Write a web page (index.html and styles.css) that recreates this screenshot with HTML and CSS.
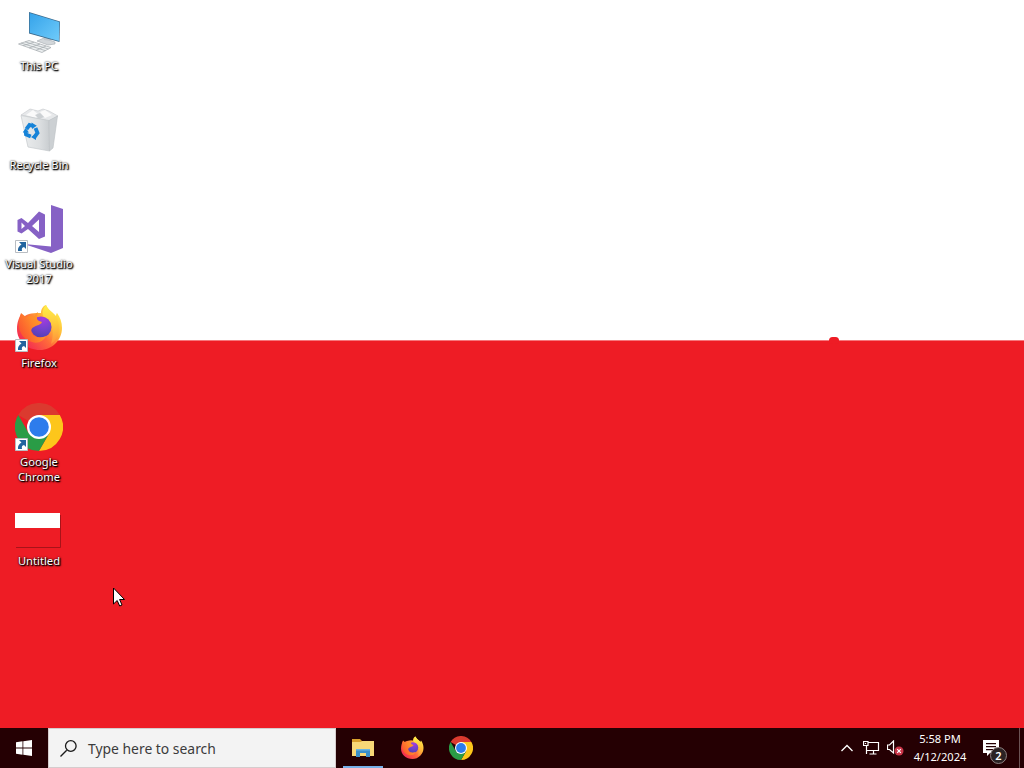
FILE: index.html
```
<!DOCTYPE html>
<html lang="en">

<head>
    <meta charset="UTF-8">
    <meta name="viewport" content="width=device-width, initial-scale=1.0">
    <title>Desktop</title>
    <link rel="stylesheet" href="styles.css">
</head>

<body>
    <!-- Shared icons, used on the desktop and in the taskbar -->
    <svg class="defs" width="0" height="0">
        <defs>
            <linearGradient id="screen" x1="0" y1="0" x2="1" y2="1">
                <stop offset="0" stop-color="#35a3ea" />
                <stop offset="1" stop-color="#6fcbfa" />
            </linearGradient>
            <linearGradient id="bin" x1="0" y1="0" x2="1" y2="0">
                <stop offset="0" stop-color="#eceeef" />
                <stop offset="0.65" stop-color="#dcdfe1" />
                <stop offset="1" stop-color="#c9cdd0" />
            </linearGradient>
            <linearGradient id="fox" x1="0.9" y1="0.15" x2="0.15" y2="0.8">
                <stop offset="0" stop-color="#ffe94a" />
                <stop offset="0.3" stop-color="#ffb638" />
                <stop offset="0.6" stop-color="#ff6a3a" />
                <stop offset="1" stop-color="#f5324f" />
            </linearGradient>
            <linearGradient id="fox-tail" x1="0" y1="0" x2="0" y2="1">
                <stop offset="0" stop-color="#fff04a" />
                <stop offset="0.5" stop-color="#ffc83c" />
                <stop offset="1" stop-color="#ff8f3c" />
            </linearGradient>
            <linearGradient id="fox-head" x1="1" y1="0" x2="0" y2="0.6">
                <stop offset="0" stop-color="#ffa42a" />
                <stop offset="0.5" stop-color="#ff8a2a" />
                <stop offset="1" stop-color="#fb5630" />
            </linearGradient>
            <radialGradient id="globe" cx="0.6" cy="0.1" r="0.9">
                <stop offset="0" stop-color="#a63be0" />
                <stop offset="0.6" stop-color="#7142cc" />
                <stop offset="1" stop-color="#5540b4" />
            </radialGradient>
            <symbol id="firefox" viewBox="0 0 48 48">
                <path fill="url(#fox)" d="M26 9 C26 5 28 2 31 1 C33 6 36 7 39 10 L41 12 C41 10 42 9 42 9 C45 13 47 18 47 24 C47 36 37 46 25 46 C12 46 2 37 2 25 C2 18 4 14 6 10 L9 13 C12 9 20 9 26 9z" />
                <path fill="url(#fox-tail)" d="M31 1 C33 6 38 8 41 13 C46 21 45 34 36 40 C39 31 39 21 31 15 C26 12 27 5 31 1z" />
                <circle cx="26" cy="23" r="10.5" fill="url(#globe)" />
                <path fill="url(#fox-head)" d="M6 9 L11 13 C14 11 17 12 19 13 C20 11 21 9 23 8 C22 11 22 13 22 15 C23 17 25 17 27 18 C26 21 22 21 19 23 C16 24 15 28 18 31 C21 34 27 34 31 32 C29 37 23 40 17 38 C9 36 4 29 4 21 C4 16 5 13 6 9z" />
            </symbol>
            <symbol id="chrome" viewBox="0 0 48 48">
                <path fill="#db3a2f" d="M24 24 L3.2 12 A24 24 0 0 1 44.8 12z" />
                <path fill="#fdc61b" d="M24 12 L44.8 12 A24 24 0 0 1 24 48 L34.4 30z" />
                <path fill="#2a9c46" d="M3.2 12 L13.6 30 L24 36 L34.4 30 L24 48 A24 24 0 0 1 3.2 12z" />
                <circle cx="24" cy="24" r="12" fill="#fff" />
                <circle cx="24" cy="24" r="9.8" fill="#2d7cec" />
            </symbol>
            <symbol id="shortcut" viewBox="0 0 13 13">
                <path fill="#fff" stroke="#b9bdc2" d="M0.5 0.5 H12.5 V12.5 H0.5z" />
                <path fill="#23649f" d="M4 2 H11 V9 L9 7 C7 7.500 6.500 8.500 7 11 H3 C2.500 8 4 6 6.500 4.500z" />
            </symbol>
        </defs>
    </svg>

    <div class="desktop">
        <div class="icons">
            <div class="icon">
                <svg class="picture" viewBox="0 0 48 48">
                    <path fill="#d3d7da" stroke="#a3a9ae" stroke-width="0.6" d="M22 34 L29 31 L40 35 L40 37 L33 38z" />
                    <path fill="#c3c8cc" d="M29 28 L36 30 L36 34 L29 33z" />
                    <path fill="#3c6a8c" d="M14 5 L45 14.5 L44.5 35 L14 26.5z" />
                    <path fill="url(#screen)" d="M14.7 6 L44.3 15 L43.9 34 L14.7 25.7z" />
                    <path fill="#edf0f1" stroke="#a0a6aa" stroke-width="0.7" d="M3.5 37 L14 33.5 L36 40.5 L27 45.5z" />
                    <path fill="none" stroke="#a8aeb2" stroke-width="0.8" d="M6 36 L30.5 43.7 M10 34.8 L33.5 42 M8 38.6 L19 35.2 M14 41 L25 37 M21 43.4 L31 39" />
                </svg>
                <span>This PC</span>
            </div>
            <div class="icon">
                <svg class="picture" viewBox="0 0 48 48">
                    <path fill="#e6e8ea" stroke="#c4c8cb" stroke-width="0.6" d="M6 9 L15 3 L23 5 L28 3 L34 5 L43 10 L34 15z" />
                    <path fill="#fafafa" d="M11 9 L18 4 L24 9 L21 12z M25 6 L30 4 L37 9 L30 12z" />
                    <path fill="#ccd0d3" d="M20 9 L25 7 L29 11 L24 13z" />
                    <path fill="url(#bin)" stroke="#c4c8cb" stroke-width="0.7" d="M6 9.500 L34 14.5 L34.5 45 L13 41z" />
                    <path fill="#ccd0d3" stroke="#babfc2" stroke-width="0.6" d="M34 14.5 L42.5 10 L38 42 L34.5 45z" />
                    <path fill="none" stroke="#1683d8" stroke-width="3.8" d="M11.5 23 L14.5 19 L18 20 M20.5 22 L22.5 27 L19.5 31 M15.8 30.5 L11 28.5 L10.5 25" />
                    <path fill="#1683d8" d="M16.5 16.5 L21.8 19.8 L17 23z M21 27.5 L16 31 L21 34z M7.8 26.5 L10.6 22 L14 26.5z" />
                </svg>
                <span>Recycle Bin</span>
            </div>
            <div class="icon">
                <svg class="picture" viewBox="0 0 48 48">
                    <path fill="#8661c5" d="M36 0 L48 4 V43 L36 48 L9 39 L36 41.5z" />
                    <path fill="#8661c5" fill-rule="evenodd" d="M2.500 15 L6.500 13 L13 18 L24 6.500 L30 9.500 V31.500 L24 34 L13 24 L6.500 28.500 L2.500 26.500z M6.500 17.500 V24 L10 21z M24 14.500 L17 21 L24 27z" />
                    <use href="#shortcut" x="0" y="35" width="13" height="13" />
                </svg>
                <span>Visual Studio<br>2017</span>
            </div>
            <div class="icon">
                <svg class="picture" viewBox="0 0 48 48">
                    <use href="#firefox" width="48" height="48" />
                    <use href="#shortcut" x="0" y="35" width="13" height="13" />
                </svg>
                <span>Firefox</span>
            </div>
            <div class="icon">
                <svg class="picture" viewBox="0 0 48 48">
                    <use href="#chrome" width="48" height="48" />
                    <use href="#shortcut" x="0" y="35" width="13" height="13" />
                </svg>
                <span>Google<br>Chrome</span>
            </div>
            <div class="icon">
                <svg class="picture" viewBox="0 0 48 48">
                    <path fill="#ee1c25" d="M0 11 H45 V45 H0z" />
                    <path fill="#fff" d="M0 11 H45 V26 H0z" />
                    <path fill="none" stroke="#a81319" d="M1 45.5 H45.5 V13" />
                </svg>
                <span>Untitled</span>
            </div>
        </div>

        <div class="blob"></div>

        <svg class="cursor" viewBox="0 0 12 20">
            <path fill="#fff" stroke="#000" d="M0.5 1 V17 L4.2 13.5 L6.7 19 L9 18 L6.6 12.5 H11.5z" />
        </svg>
    </div>

    <div class="taskbar">
        <div class="start">
            <svg width="16" height="16" viewBox="0 0 16 16">
                <path fill="#fff" d="M0 2.3 L6.5 1.3 V7.5 H0z M7.3 1.2 L16 0 V7.5 H7.3z M0 8.4 H6.5 V14.7 L0 13.7z M7.3 8.4 H16 V16 L7.3 14.8z" />
            </svg>
        </div>
        <div class="search">
            <svg width="17" height="17" viewBox="0 0 17 17">
                <path fill="none" stroke="#1a1a1a" stroke-width="1.3" d="M6.7 10.3 L0.5 16.5" />
                <circle cx="10.8" cy="6" r="5.3" fill="none" stroke="#1a1a1a" stroke-width="1.3" />
            </svg>
            <span>Type here to search</span>
        </div>
        <div class="apps">
            <div class="app active">
                <svg width="22" height="20" viewBox="0 0 22 20">
                    <path fill="#d9a02c" d="M0 1 H8 L10 3 H22 V8 H0z" />
                    <path fill="#f8d877" d="M0 4 H8.5 L10.5 3 H22 V18 H0z" />
                    <path fill="#3a8fc9" d="M4 19 V11 H18 V19 H14 V15 H8 V19z" />
                    <path fill="#69b5e2" d="M4 11 H18 V12.5 H4z" />
                </svg>
            </div>
            <div class="app">
                <svg width="24" height="24"><use href="#firefox" width="24" height="24" /></svg>
            </div>
            <div class="app">
                <svg width="24" height="24"><use href="#chrome" width="24" height="24" /></svg>
            </div>
        </div>
        <div class="tray">
            <svg width="12" height="8" viewBox="0 0 12 8">
                <path fill="none" stroke="#fff" stroke-width="1.3" d="M0.5 7 L6 1.5 L11.5 7" />
            </svg>
            <svg class="network" width="17" height="14" viewBox="0 0 17 14">
                <path fill="none" stroke="#fff" stroke-width="1.2" d="M5 1.5 H15.5 V9.5 H3.5 M3.5 5 V13 M10.5 9.5 V12.5 M6.5 13 H13.5" />
                <path fill="none" stroke="#fff" stroke-width="1.2" d="M0.5 0.5 H5 V4.5 H0.5z M2.5 2 V3" />
            </svg>
            <svg class="volume" width="17" height="16" viewBox="0 0 17 16">
                <path fill="none" stroke="#fff" stroke-width="1.2" d="M0.5 5 H2.5 L6.5 1 V13 L2.5 9.5 H0.5z" />
                <circle cx="12" cy="11" r="4.5" fill="#c93548" />
                <path stroke="#fff" stroke-width="1.2" d="M10.2 9.2 L13.8 12.8 M13.8 9.2 L10.2 12.8" />
            </svg>
            <div class="clock">
                <div class="time">5:58 PM</div>
                <div class="date">4/12/2024</div>
            </div>
            <div class="notifications">
                <svg width="17" height="16" viewBox="0 0 17 16">
                    <path fill="#fff" fill-rule="evenodd" d="M0 0 H16 V13 H7 L4 16 V13 H0z M3 3 V4.2 H13 V3z M3 6 V7.2 H13 V6z M3 9 V10.2 H10 V9z" />
                </svg>
                <span class="count">2</span>
            </div>
            <div class="show-desktop"></div>
        </div>
    </div>
</body>

</html>
```
FILE: styles.css
```
body {
    margin: 0;
    height: 768px;
    display: flex;
    flex-direction: column;
    overflow: hidden;
    font-family: "Noto Sans", "Open Sans", sans-serif;
}

.defs {
    position: absolute;
}

.desktop {
    position: relative;
    flex: 1;
    background: linear-gradient(#fff 340px, #f6767c 340px, #f6767c 341px, #ee1c25 341px);
}

.icons {
    display: flex;
    flex-direction: column;
    width: 78px;
}

.icon {
    display: flex;
    flex-direction: column;
    align-items: center;
    gap: 3px;
    height: 92px;
    padding-top: 7px;
    color: #fff;
    font-size: 11.2px;
    line-height: 15px;
    text-align: center;
    white-space: nowrap;
    text-shadow: 1px 1px 1px #000, 1px 1px 2px #000, 0 0 2px #000;
}

.picture {
    width: 48px;
    height: 48px;
    flex-shrink: 0;
}

/* small bump on the edge of the red half */
.blob {
    position: absolute;
    left: 829px;
    top: 337px;
    width: 10px;
    height: 7px;
    border-radius: 5px;
    background-color: #ee1c25;
}

.cursor {
    position: absolute;
    left: 113px;
    top: 587px;
    width: 12px;
    height: 20px;
}

.taskbar {
    display: flex;
    height: 40px;
    background-color: #250003;
    color: #fff;
}

.start {
    display: flex;
    align-items: center;
    justify-content: center;
    width: 48px;
}

.search {
    display: flex;
    align-items: center;
    gap: 11px;
    box-sizing: border-box;
    width: 288px;
    padding-left: 11px;
    border: 1px solid #d5cccd;
    background-color: #f3f3f3;
    color: #3b3b3b;
    font-size: 13.9px;
}

.apps {
    display: flex;
    gap: 9px;
    margin-left: 7px;
}

.app {
    display: flex;
    align-items: center;
    justify-content: center;
    box-sizing: border-box;
    width: 40px;
}

.active {
    padding-top: 2px;
    border-bottom: 2px solid #76b0e8;
}

.tray {
    display: flex;
    align-items: center;
    margin-left: auto;
}

.network {
    margin-left: 10px;
}

.volume {
    margin-left: 7px;
}

.clock {
    width: 56px;
    margin-left: 8px;
    padding-bottom: 1px;
    font-size: 11.1px;
    line-height: 18px;
    text-align: center;
    white-space: nowrap;
}

.notifications {
    position: relative;
    display: flex;
    width: 36px;
    margin-left: 15px;
}

.count {
    position: absolute;
    left: 7px;
    top: 7px;
    box-sizing: border-box;
    width: 17px;
    height: 17px;
    border: 1px solid #8d8081;
    border-radius: 50%;
    background-color: #2b2223;
    font-size: 11px;
    font-weight: 600;
    line-height: 15px;
    text-align: center;
}

.show-desktop {
    width: 4px;
    height: 40px;
    border-left: 1px solid #6b5355;
}
```
